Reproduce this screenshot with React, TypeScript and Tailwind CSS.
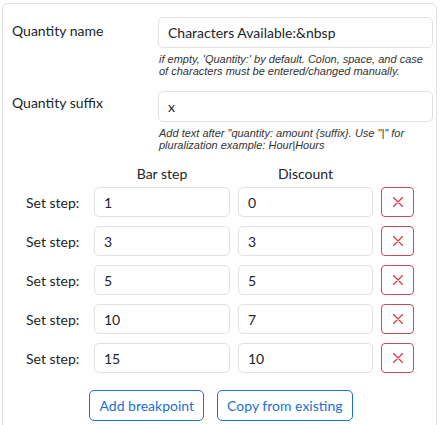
const steps = [
  { bar: '1', discount: '0' },
  { bar: '3', discount: '3' },
  { bar: '5', discount: '5' },
  { bar: '10', discount: '7' },
  { bar: '15', discount: '10' },
]

const inputCls =
  'rounded-[5px] border border-[#dee2e6] bg-white px-[9px] text-[14px] text-[#212529] outline-none'

const suffixHelp = 'Add text after "quantity: amount {suffix}. Use "|" for pluralization example: Hour|Hours'

// thin "x" used on the delete buttons
const CloseIcon = () => (
  <svg width="10" height="10" viewBox="0 0 10 10" fill="none" stroke="currentColor" strokeWidth="1.3" strokeLinecap="round">
    <path d="M0.5 0.5L9.5 9.5M9.5 0.5L0.5 9.5" />
  </svg>
)

export default function App() {
  return (
    <div className="h-[425px] overflow-hidden bg-white pl-[2px] pr-[4px] pt-[3px] font-['Lato',sans-serif] text-[#212529]">
      <div className="h-[440px] rounded-[6px] border border-[#dee2e6] pl-[9px] pr-[3px] pt-[13px]">
        {/* Quantity name */}
        <div className="flex">
          <label className="w-[147px] pt-[2px] text-[14px] leading-[24px]">Quantity name</label>
          <div className="flex-1">
            <input className={`${inputCls} h-[31px] w-[275px]`} readOnly value="Characters Available:&nbsp" />
            <p className="mt-[5px] pl-[1px] font-['Liberation_Sans',sans-serif] text-[11px] italic leading-[12px] text-[#333]">
              if empty, 'Quantity:' by default. Colon, space, and case of characters must be entered/changed manually.
            </p>
          </div>
        </div>

        {/* Quantity suffix */}
        <div className="mt-[14px] flex">
          <label className="w-[147px] text-[14px] leading-[24px]">Quantity suffix</label>
          <div className="flex-1">
            <input className={`${inputCls} h-[31px] w-[275px]`} readOnly value="x" />
            <p className="mt-[5px] pl-[1px] pr-[20px] font-['Liberation_Sans',sans-serif] text-[11px] italic leading-[12px] text-[#333]">
              {suffixHelp}
            </p>
          </div>
        </div>

        {/* Breakpoints */}
        <div className="mt-[12px] flex text-[14px]">
          <div className="w-[82px]" />
          <div className="w-[136px] text-center">Bar step</div>
          <div className="ml-[8px] w-[135px] text-center">Discount</div>
        </div>

        <div className="mt-[3px] flex flex-col gap-[9px]">
          {steps.map((s, i) => (
            <div key={i} className="flex h-[30px] items-center">
              <span className="w-[82px] pl-[14px] text-[14px]">Set step:</span>
              <input className={`${inputCls} h-[30px] w-[136px]`} readOnly value={s.bar} />
              <input className={`${inputCls} ml-[8px] h-[30px] w-[135px]`} readOnly value={s.discount} />
              <button className="ml-[8px] flex h-[30px] w-[33px] items-center justify-center rounded-[4px] border border-[#c0505a] text-[#dc3545]">
                <CloseIcon />
              </button>
            </div>
          ))}
        </div>

        <div className="mt-[17px] flex justify-center gap-[13px] pr-[3px]">
          <button className="h-[31px] rounded-[5px] border border-[#1b6fd6] px-[9px] text-[14px] text-[#1b6fd6]">
            Add breakpoint
          </button>
          <button className="h-[31px] rounded-[5px] border border-[#1b6fd6] px-[9px] text-[14px] text-[#1b6fd6]">
            Copy from existing
          </button>
        </div>
      </div>
    </div>
  )
}
